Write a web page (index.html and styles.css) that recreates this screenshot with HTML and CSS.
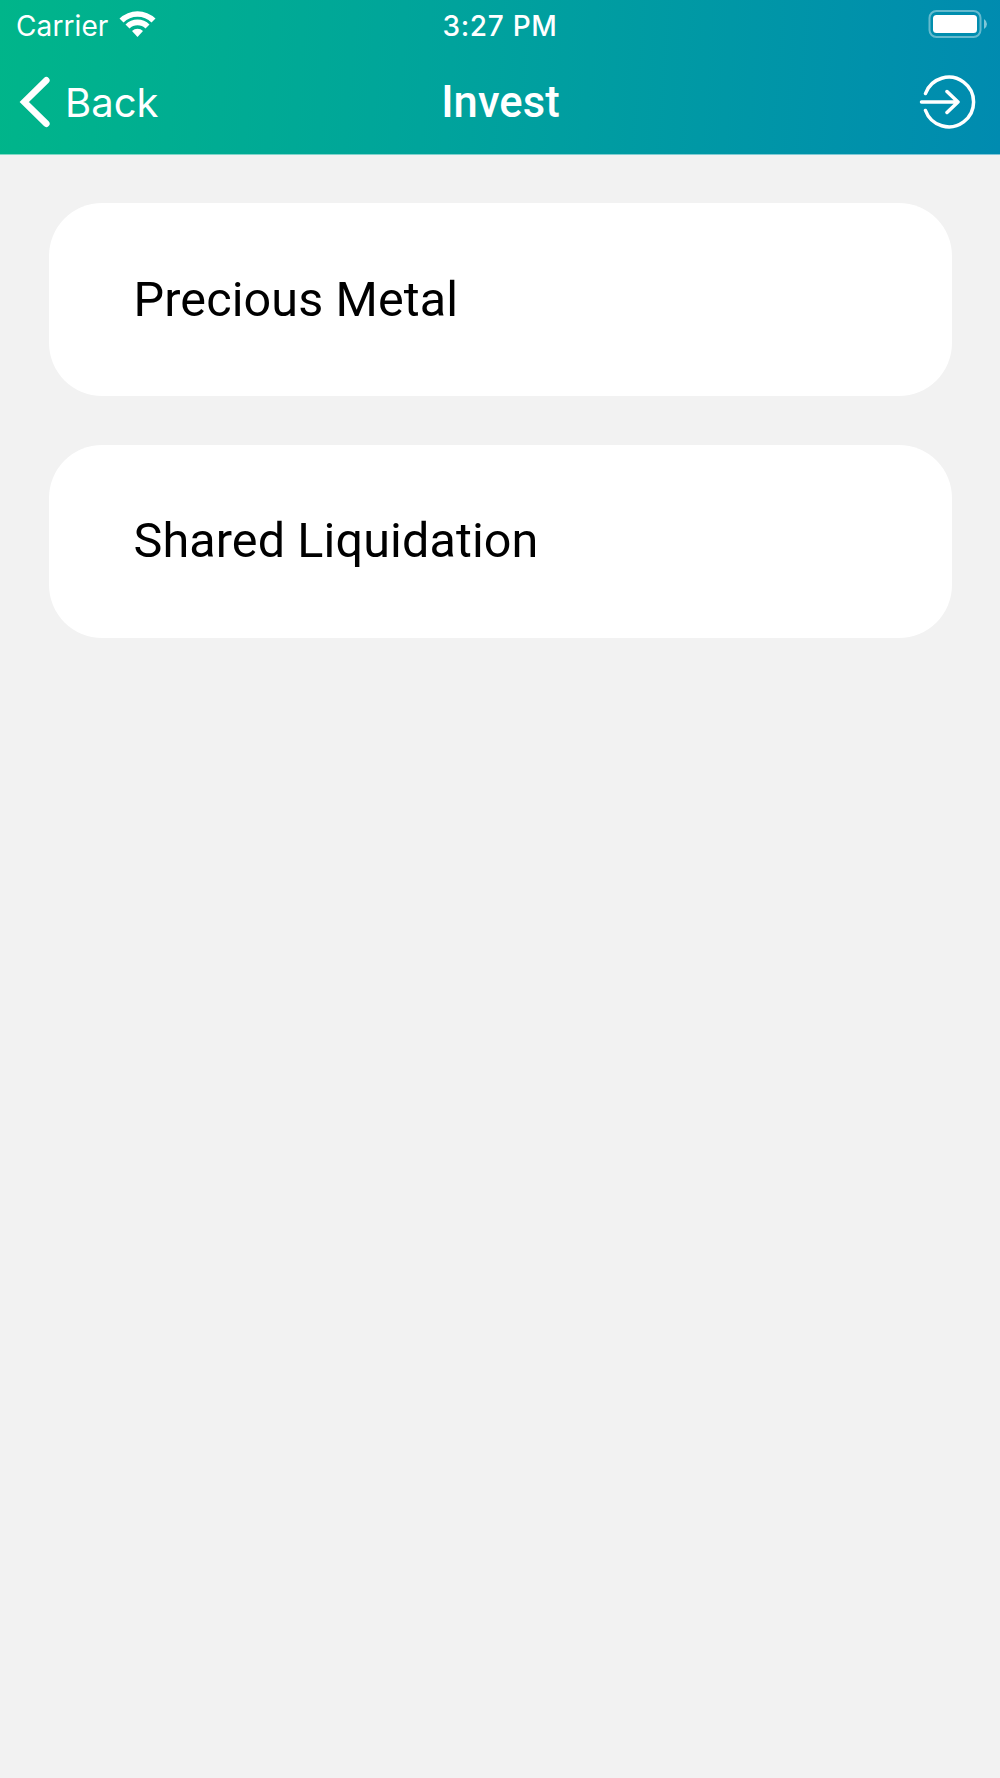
FILE: index.html
```html
<!DOCTYPE html>
<html lang="en">
<head>
  <meta charset="UTF-8" />
  <meta name="viewport" content="width=device-width, initial-scale=1.0"/>
  <title>Invest</title>
  <link rel="stylesheet" href="styles.css">
</head>
<body>

  <header class="header">
    <div class="status-bar">
      <div class="carrier">
        <span>Carrier</span>
        <svg class="wifi" width="37" height="28" viewBox="0 0 37 28">
          <path d="M0.500 8.500 A26 26 0 0 1 36.500 8.500 L32.500 12.500 A20 20 0 0 0 4.500 12.500 Z" fill="#fff"/>
          <path d="M6.500 14.500 A17 17 0 0 1 30.500 14.500 L26.500 18.500 A11.500 11.500 0 0 0 10.500 18.500 Z" fill="#fff"/>
          <path d="M13 21 A8 8 0 0 1 24 21 L18.500 27 Z" fill="#fff"/>
        </svg>
      </div>
      <div class="time">3:27 PM</div>
      <div class="battery">
        <svg width="60" height="28" viewBox="0 0 60 28">
          <rect x="1.500" y="1" width="51" height="26" rx="7" fill="none" stroke="#fff" stroke-opacity="0.4" stroke-width="2"/>
          <rect x="5" y="5" width="44" height="18" rx="3.500" fill="#fff"/>
          <path d="M56 9 Q59 11 59 14 Q59 17 56 19 Z" fill="#fff" fill-opacity="0.5"/>
        </svg>
      </div>
    </div>

    <nav class="nav-bar">
      <a class="back" href="#">
        <svg width="32" height="52" viewBox="0 0 32 52">
          <path d="M27.300 4.300 L5.300 26 L27.300 47.700" fill="none" stroke="#fff" stroke-width="6.600" stroke-linecap="round"/>
        </svg>
        <span>Back</span>
      </a>
      <h1 class="title">Invest</h1>
      <a class="logout" href="#">
        <svg width="58" height="56" viewBox="0 0 58 56">
          <path d="M6.500 19.500 A24.800 24.800 0 1 1 6.500 36.500 M2.500 28 H39 M28 17.500 L39 28 L28 38.500" fill="none" stroke="#fff" stroke-width="3.500" stroke-linecap="round" stroke-linejoin="round"/>
        </svg>
      </a>
    </nav>
  </header>

  <main class="list">
    <a class="card" href="#">Precious Metal</a>
    <a class="card" href="#">Shared Liquidation</a>
  </main>

</body>
</html>
```
FILE: styles.css
```css
* {
  box-sizing: border-box;
}
body {
  margin: 0;
  min-height: 1778px;
  background-color: #f2f2f2;
  font-family: Inter, sans-serif;
}
a {
  color: inherit;
  text-decoration: none;
}
svg {
  display: block;
}
.header {
  height: 155px;
  color: #ffffff;
  background: linear-gradient(94deg, #00b58a, #00a39c 45%, #008bb0);
  border-bottom: 1px solid rgba(255, 255, 255, 0.5);
}
.status-bar {
  display: grid;
  grid-template-columns: 1fr auto 1fr;
  align-items: center;
  height: 50px;
  padding: 0 12px;
  font-size: 28px;
}
.carrier {
  display: flex;
  align-items: center;
  gap: 11px;
  padding-left: 4px;
}
.carrier span {
  padding-top: 1px;
  letter-spacing: 0.1px;
}
.wifi {
  margin-bottom: 3px;
}
.time {
  padding-top: 1px;
  font-weight: 500;
  letter-spacing: 0.7px;
}
.battery {
  justify-self: end;
  margin-bottom: 2px;
}
.nav-bar {
  display: grid;
  grid-template-columns: 1fr auto 1fr;
  align-items: center;
  height: 103px;
  padding: 0 22px;
}
.back {
  display: flex;
  align-items: center;
  gap: 14px;
  margin-left: -3px;
  font-size: 40px;
}
.back span {
  padding-top: 2px;
}
.title {
  margin: 0;
  padding: 2px 0 0 1px;
  font-family: Roboto, sans-serif;
  font-size: 43.500px;
  font-weight: 500;
  letter-spacing: 0.1px;
}
.logout {
  justify-self: end;
  margin-right: 1px;
}
.list {
  display: flex;
  flex-direction: column;
  gap: 48.500px;
  padding: 48px 48.500px;
}
.card {
  display: flex;
  align-items: center;
  height: 193px;
  padding: 0 85px 1px;
  border-radius: 53px;
  background-color: #ffffff;
  color: #000000;
  font-family: Roboto, sans-serif;
  font-size: 48.500px;
  letter-spacing: 0.120px;
}
```
